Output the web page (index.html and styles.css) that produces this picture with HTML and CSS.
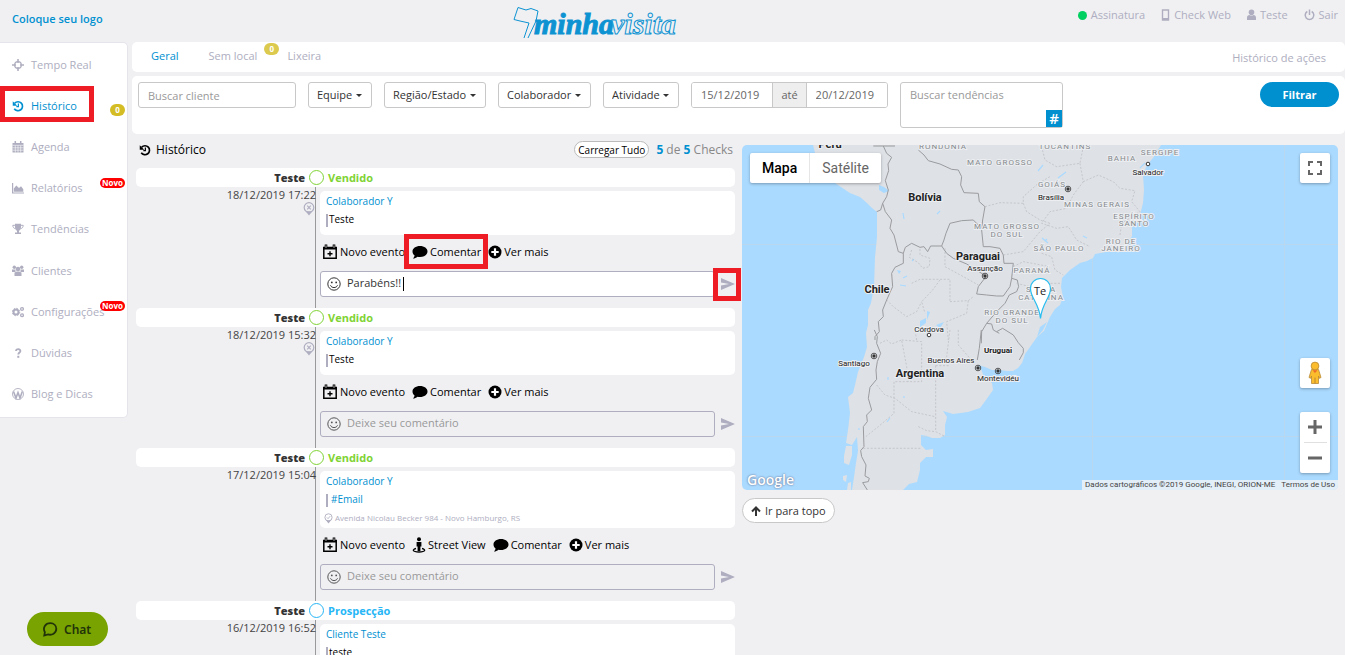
FILE: index.html
```html
<!DOCTYPE html>
<html lang="pt-BR">
<head>
    <meta charset="UTF-8">
    <meta name="viewport" content="width=device-width, initial-scale=1.0">
    <title>Minha Visita - Histórico</title>
    <link rel="stylesheet" href="styles.css">
</head>
<body>

    <!-- Shared icons -->
    <svg class="sprite" width="0" height="0" aria-hidden="true">
        <symbol id="i-history" viewBox="0 0 16 16"><path d="M3.6 4.2A6 6 0 1 1 3 11.6" fill="none" stroke="currentColor" stroke-width="2.2"/><path d="M1 1.5v6h6z" fill="currentColor"/><path d="M8.5 4.8v4H5.8" fill="none" stroke="currentColor" stroke-width="1.6"/></symbol>
        <symbol id="i-event" viewBox="0 0 16 16"><path d="M1.8 3.5h12.4v10.7H1.8z" fill="none" stroke="currentColor" stroke-width="1.5"/><path d="M1 3h14v2.500H1z" fill="currentColor"/><path d="M4 .6v4M12 .6v4" stroke="currentColor" stroke-width="2.6"/><path d="M4 1.4v2.4M12 1.4v2.4" stroke="#fff" stroke-width=".8"/><path d="M8 7.300v5M5.500 9.800h5" stroke="currentColor" stroke-width="1.4"/></symbol>
        <symbol id="i-comment" viewBox="0 0 16 14"><path d="M8 1c4.300 0 7.500 2.400 7.500 5.500S12.300 12 8 12c-.9 0-1.700-.1-2.500-.3C4.200 12.800 2.600 13.400 1 13.500c.9-.9 1.500-1.900 1.600-3C1.300 9.500.5 8.100.5 6.500.5 3.400 3.700 1 8 1z" fill="currentColor"/></symbol>
        <symbol id="i-plus" viewBox="0 0 14 14"><circle cx="7" cy="7" r="6.500" fill="currentColor"/><path d="M7 3.300v7.400M3.300 7h7.400" stroke="#fff" stroke-width="2.200"/></symbol>
        <symbol id="i-street" viewBox="0 0 14 16"><circle cx="7" cy="2.300" r="2" fill="currentColor"/><path d="M4.600 5h4.800v4.500h-1V14H5.600V9.500h-1z" fill="currentColor"/><path d="M4 11.500c-4 .8-4 3.500 3 3.500s7-2.700 3-3.500" fill="none" stroke="currentColor" stroke-width="1.300"/></symbol>
        <symbol id="i-smile" viewBox="0 0 14 14"><circle cx="7" cy="7" r="6.200" fill="none" stroke="currentColor"/><circle cx="4.800" cy="5.400" r=".9" fill="currentColor"/><circle cx="9.200" cy="5.400" r=".9" fill="currentColor"/><path d="M3.500 8.300c1 3 6 3 7 0" fill="none" stroke="currentColor"/></symbol>
        <symbol id="i-send" viewBox="0 0 14 12"><path d="M0 0l14 6L0 12V7.600L8 6 0 4.400z" fill="currentColor"/></symbol>
        <symbol id="i-pin-x" viewBox="0 0 12 14"><path d="M6 13.500L2.600 9.300h6.800z" fill="currentColor"/><circle cx="6" cy="5.500" r="4.800" fill="none" stroke="currentColor" stroke-width="1.200"/><path d="M4.200 3.700l3.600 3.600M7.800 3.700L4.200 7.300" stroke="currentColor" stroke-width="1.100"/></symbol>
        <symbol id="i-pin-ok" viewBox="0 0 12 14"><path d="M6 13.500L2.600 9.300h6.800z" fill="currentColor"/><circle cx="6" cy="5.500" r="4.800" fill="none" stroke="currentColor" stroke-width="1.200"/><path d="M3.800 5.500l1.600 1.700 2.900-3.400" fill="none" stroke="currentColor" stroke-width="1.100"/></symbol>
    </svg>

    <header class="topbar">
        <a href="#" class="client-logo">Coloque seu logo</a>
        <a href="#" class="brand" aria-label="minhavisita">
            <svg width="166" height="34" viewBox="0 0 166 34">
                <path d="M5 2.500l8 2.500 5-1.500 7 2.500-2 10-8 17M1 14.500l6 1.500 9 2M5 2.500L1 14.500M16 18l-5 15" fill="none" stroke="#0d93d2"/>
                <text x="21" y="29" class="brand-solid">minha</text>
                <text x="98" y="29" class="brand-line">visita</text>
            </svg>
        </a>
        <nav class="user-links">
            <a href="#"><span class="status-dot"></span>Assinatura</a>
            <a href="#"><svg width="9" height="12" viewBox="0 0 9 12"><path d="M1.500 1h6v10h-6z" fill="none" stroke="currentColor" stroke-width="1.400"/><path d="M1 9h7v2H1z" fill="currentColor"/></svg>Check Web</a>
            <a href="#"><svg width="9" height="12" viewBox="0 0 9 12"><circle cx="4.500" cy="3.300" r="2.800" fill="currentColor"/><path d="M0 11V8.500C0 7 1 6 2.400 6c1.200.8 3 .8 4.200 0C8 6 9 7 9 8.500V11z" fill="currentColor"/></svg>Teste</a>
            <a href="#"><svg width="11" height="12" viewBox="0 0 11 12"><path d="M3.300 2.500a4.300 4.300 0 1 0 4.400 0M5.500.5v5.500" fill="none" stroke="currentColor" stroke-width="1.500"/></svg>Sair</a>
        </nav>
    </header>

    <div class="layout">
        <aside class="sidebar">
            <ul class="menu">
                <li><a href="#"><svg viewBox="0 0 12 12"><circle cx="6" cy="6" r="3.300" fill="none" stroke="currentColor" stroke-width="1.300"/><path d="M6 0v4M6 8v4M0 6h4M8 6h4" stroke="currentColor" stroke-width="1.600"/></svg>Tempo Real</a></li>
                <li class="active"><a href="#"><svg><use href="#i-history"/></svg>Histórico</a><span class="count">0</span></li>
                <li><a href="#"><svg viewBox="0 0 12 12"><path d="M.5 2h11v9.500H.5z" fill="currentColor"/><path d="M3.300 0v3M8.700 0v3" stroke="currentColor" stroke-width="1.500"/><path d="M.5 4.300h11M.5 6.800h11M.5 9.200h11M3.300 4.500v7M6 4.500v7M8.700 4.500v7" stroke="#fff" stroke-width=".6"/></svg>Agenda</a></li>
                <li><a href="#"><svg viewBox="0 0 12 12"><path d="M.6 1v10H12" fill="none" stroke="currentColor" stroke-width="1.200"/><path d="M1.800 9.800V6.500L4.300 3.500 7 6l2-1.800 2.300 3v2.600z" fill="currentColor"/></svg>Relatórios</a><span class="new">Novo</span></li>
                <li><a href="#"><svg viewBox="0 0 12 12"><path d="M3 .8h6v3.500C9 6.500 7.500 7.500 7 7.800V9.500h2V11H3V9.500h2V7.800C4.500 7.500 3 6.500 3 4.300z" fill="currentColor"/><path d="M3 2.300H.8c0 2 1 3 2.600 3.400M9 2.300h2.200c0 2-1 3-2.600 3.400" fill="none" stroke="currentColor"/></svg>Tendências</a></li>
                <li><a href="#"><svg viewBox="0 0 12 12"><circle cx="2.300" cy="2.300" r="1.700" fill="currentColor"/><circle cx="9.700" cy="2.300" r="1.700" fill="currentColor"/><circle cx="6" cy="4" r="2.300" fill="currentColor"/><path d="M0 4.500h3.500V7H0zM8.500 4.500H12V7H8.500zM2.500 7.500C4 6 8 6 9.500 7.500V11h-7z" fill="currentColor"/></svg>Clientes</a></li>
                <li><a href="#"><svg viewBox="0 0 12 12"><circle cx="4" cy="6" r="2.500" fill="none" stroke="currentColor" stroke-width="2"/><circle cx="4" cy="6" r="3.700" fill="none" stroke="currentColor" stroke-dasharray="1.500 1.400"/><circle cx="10" cy="3" r="1.400" fill="none" stroke="currentColor" stroke-width="1.300"/><circle cx="10" cy="9.300" r="1.400" fill="none" stroke="currentColor" stroke-width="1.300"/></svg>Configurações</a><span class="new">Novo</span></li>
                <li><a href="#"><svg viewBox="0 0 12 12"><path d="M4 4c0-2.600 4.600-2.400 4.400.2C8.300 5.600 6.300 5.600 6.300 7.600" fill="none" stroke="currentColor" stroke-width="1.800"/><path d="M5.300 8.800h2v2h-2z" fill="currentColor"/></svg>Dúvidas</a></li>
                <li><a href="#"><svg viewBox="0 0 12 12"><circle cx="6" cy="6" r="5.500" fill="none" stroke="currentColor" stroke-width=".9"/><path d="M1.500 3.500L4 10l2-5.500L8 10l2.300-6.500" fill="none" stroke="currentColor" stroke-width="1.600"/></svg>Blog e Dicas</a></li>
            </ul>
        </aside>

        <main class="main">
            <nav class="tabs">
                <a href="#" class="active">Geral</a>
                <a href="#">Sem local<span class="count faded">0</span></a>
                <a href="#">Lixeira</a>
                <a href="#" class="actions-log">Histórico de ações</a>
            </nav>

            <form class="filters">
                <input type="text" class="field client" placeholder="Buscar cliente" aria-label="Buscar cliente">
                <label class="drop"><select aria-label="Equipe"><option>Equipe</option></select></label>
                <label class="drop"><select aria-label="Região/Estado"><option>Região/Estado</option></select></label>
                <label class="drop"><select aria-label="Colaborador"><option>Colaborador</option></select></label>
                <label class="drop"><select aria-label="Atividade"><option>Atividade</option></select></label>
                <div class="dates">
                    <input type="text" value="15/12/2019" aria-label="Data inicial">
                    <span>até</span>
                    <input type="text" value="20/12/2019" aria-label="Data final">
                </div>
                <div class="trends">
                    <textarea placeholder="Buscar tendências" aria-label="Buscar tendências"></textarea>
                    <button type="button" aria-label="Adicionar tendência">#</button>
                </div>
                <button type="button" class="filter-button">Filtrar</button>
            </form>

            <div class="content">
                <section class="timeline">
                    <div class="timeline-title">
                        <h2><svg width="12" height="12"><use href="#i-history"/></svg>Histórico</h2>
                        <button type="button" class="load-all">Carregar Tudo</button>
                        <p><b>5</b> de <b>5</b> Checks</p>
                    </div>

                    <div class="entries">
                        <article class="entry">
                            <div class="entry-head"><strong>Teste</strong><i class="dot"></i><span>Vendido</span></div>
                            <div class="entry-when"><time>18/12/2019 17:22</time><svg width="12" height="14"><use href="#i-pin-x"/></svg></div>
                            <div class="entry-body">
                                <div class="card"><a href="#">Colaborador Y</a><p>Teste</p></div>
                                <div class="actions">
                                    <button type="button"><svg width="16" height="16"><use href="#i-event"/></svg>Novo evento</button>
                                    <button type="button" class="marked"><svg width="16" height="14"><use href="#i-comment"/></svg>Comentar</button>
                                    <button type="button"><svg width="14" height="14"><use href="#i-plus"/></svg>Ver mais</button>
                                </div>
                                <div class="reply">
                                    <div class="reply-box writing"><svg width="14" height="14"><use href="#i-smile"/></svg><div class="typed"><input type="text" value="Parabéns!!" aria-label="Comentário"><span class="caret"></span></div></div>
                                    <button type="button" class="send marked" aria-label="Enviar"><svg width="14" height="12"><use href="#i-send"/></svg></button>
                                </div>
                            </div>
                        </article>

                        <article class="entry">
                            <div class="entry-head"><strong>Teste</strong><i class="dot"></i><span>Vendido</span></div>
                            <div class="entry-when"><time>18/12/2019 15:32</time><svg width="12" height="14"><use href="#i-pin-x"/></svg></div>
                            <div class="entry-body">
                                <div class="card"><a href="#">Colaborador Y</a><p>Teste</p></div>
                                <div class="actions">
                                    <button type="button"><svg width="16" height="16"><use href="#i-event"/></svg>Novo evento</button>
                                    <button type="button"><svg width="16" height="14"><use href="#i-comment"/></svg>Comentar</button>
                                    <button type="button"><svg width="14" height="14"><use href="#i-plus"/></svg>Ver mais</button>
                                </div>
                                <div class="reply">
                                    <div class="reply-box"><svg width="14" height="14"><use href="#i-smile"/></svg><input type="text" placeholder="Deixe seu comentário" aria-label="Comentário"></div>
                                    <button type="button" class="send" aria-label="Enviar"><svg width="14" height="12"><use href="#i-send"/></svg></button>
                                </div>
                            </div>
                        </article>

                        <article class="entry">
                            <div class="entry-head"><strong>Teste</strong><i class="dot"></i><span>Vendido</span></div>
                            <div class="entry-when"><time>17/12/2019 15:04</time></div>
                            <div class="entry-body">
                                <div class="card">
                                    <a href="#">Colaborador Y</a>
                                    <p><a href="#" class="tag">#Email</a></p>
                                    <address><svg width="9" height="11"><use href="#i-pin-ok"/></svg>Avenida Nicolau Becker 984 - Novo Hamburgo, RS</address>
                                </div>
                                <div class="actions">
                                    <button type="button"><svg width="16" height="16"><use href="#i-event"/></svg>Novo evento</button>
                                    <button type="button"><svg width="14" height="16"><use href="#i-street"/></svg>Street View</button>
                                    <button type="button"><svg width="16" height="14"><use href="#i-comment"/></svg>Comentar</button>
                                    <button type="button"><svg width="14" height="14"><use href="#i-plus"/></svg>Ver mais</button>
                                </div>
                                <div class="reply">
                                    <div class="reply-box"><svg width="14" height="14"><use href="#i-smile"/></svg><input type="text" placeholder="Deixe seu comentário" aria-label="Comentário"></div>
                                    <button type="button" class="send" aria-label="Enviar"><svg width="14" height="12"><use href="#i-send"/></svg></button>
                                </div>
                            </div>
                        </article>

                        <article class="entry prospect">
                            <div class="entry-head"><strong>Teste</strong><i class="dot"></i><span>Prospecção</span></div>
                            <div class="entry-when"><time>16/12/2019 16:52</time></div>
                            <div class="entry-body">
                                <div class="card"><a href="#">Cliente Teste</a><p>teste</p></div>
                            </div>
                        </article>
                    </div>
                </section>

                <section class="map-column">
                    <div class="map">
                        <svg class="map-canvas" viewBox="0 0 596 345" preserveAspectRatio="xMidYMid slice">
                            <g stroke="#b9d8f0" stroke-width="1"><path d="M0 99.500h596M0 291.500h596M350.500 0v345M542.500 0v345"/></g>
                            <!-- Land -->
                            <path fill="#dee1e6" d="M71 0L73 8 82 24 93 38 108 48 118 52 125 58 130 63 135 67 135 92 133 112 132 142 129 158 126 165 126 180 124 188 125 202 122 212 116 227 113 240 111 248 106 252 108 268 106 285 104 298 110 300 115 292 116 306 114 318 112 332 110 345 161 345 167 339 175 337 178 325 178 318 184 312 191 312 191 304 184 305 179 300 179 290 185 291 190 293 198 293 203 290 203 280 205 272 201 266 211 269 226 267 238 263 244 255 251 245 250 238 242 232 239 224 236 220 243 222 250 225 258 225 265 226 271 226 276 223 280 218 283 209 288 202 295 192 302 186 308 172 313 164 318 160 321 152 319 142 320 133 328 125 338 118 345 116 351 113 353 109 364 107 378 107 383 104 386 98 390 91 390 82 396 76 398 70 401 58 402 45 401 30 405 20 411 13 419 0z"/>
                            <path fill="#dee1e6" d="M104 301L110 301 110 310 107 320 102 318 102 311zM101 331l4-1-1 7-3-2zM106 338l3-1 0 8-4 0z"/>
                            <path fill="#aadaff" d="M137 40l5 2 5 4-5 2-5-3zM178 176l6-3 0 5-6 4zM194 180l8-3-4 6zM185 166l3 1-3 8zM155 125l4 1-2 3zM298 182l7-5-4 8-6 7z"/>
                            <path fill="none" stroke="#aadaff" stroke-width="1.200" d="M161 68l1 6M195 69l3-3M296 26l5-6M300 93l6 5M303 96l2-2M146 232v3M162 251v2M148 273l-3 4M165 131l-4 2M316 33l8-6M341 91l4 2M117 283v2M158 140l6 1M398 23l5-5M170 116l2-2"/>
                            <!-- Country borders -->
                            <g transform="scale(.3333)" fill="none" stroke="#9a9b9e" stroke-width="3">
                                <g transform="translate(-6 -15)">
                                    <path d="M400 18h65M430 18L440 40 455 52 444 72 446 92 436 122 445 150 440 170 428 190 422 210 410 215M428 190L436 215 455 240 450 265 462 285 475 335 490 340 496 322 515 310 540 322 552 320 563 335 572 318 605 318 612 300 618 280 630 250 665 242 700 240 712 252 725 270 730 320 750 320 780 325 790 345 792 370 820 370 815 415 810 440 790 468 770 468 740 465 710 462 715 440 738 410 728 402 680 372 640 355 620 340 605 318"/>
                                    <path d="M535 30L552 45 565 62 600 72 635 88 655 90 665 110 662 135 672 158 715 160 718 185 735 200 728 240 725 270"/>
                                    <path d="M490 340L490 370 465 382 455 400 458 440 440 480 428 510 430 530 415 545 418 575 405 590 405 600"/>
                                    <path d="M815 415L832 420 836 440 830 455 808 465 795 490 770 515 740 550 725 575 724 610M740 550L755 552 760 570 778 580"/>
                                </g>
                                <g transform="translate(-6 555)">
                                    <path d="M403 0L412 20 410 40 422 70 412 95 408 120 410 148 390 172 385 205 395 240 380 255 382 275 370 290 372 350 362 362 365 380 378 405 375 438 388 445 385 455 368 458 382 480"/>
                                    <path d="M724 0L718 55 712 90M770 5L788 -5 820 15 835 38 850 55 850 68 838 90"/>
                                </g>
                            </g>
                            <!-- State borders -->
                            <g transform="scale(.3333)" fill="none" stroke="#b8babe" stroke-width="2" stroke-dasharray="6 5">
                                <g transform="translate(-6 -15)">
                                    <path d="M515 330L508 352 535 368 548 385 568 380 570 355 540 345 540 322M615 325V380L670 410 715 435M515 430L540 418 630 418V485M600 420L578 450 545 485 555 520M630 485L685 482 700 470M440 480L460 500 500 530 530 515 545 485M685 482L680 520 620 545 625 600M735 200L780 188 850 190 850 170 895 130 930 110M850 190L860 215 900 240 930 250M790 345L850 335 900 275 930 250M820 380L850 365 930 380M830 430L870 440 930 435"/>
                                </g>
                                <g transform="translate(-6 555)">
                                    <path d="M420 40L440 30 455 42 485 30 500 110 505 155M485 30L545 35V155H462V250L415 290 375 322M410 165L435 195 465 205 515 245 585 260M587 107H630M587 107V305L612 318M370 355H545M530 30L525 0M630 0L620 80 600 100M655 0L655 45 690 85M535 290L560 302 587 305"/>
                                </g>
                                <g transform="translate(894 -15)">
                                    <path d="M5 20L15 60 50 80 120 70 130 20M120 70L130 125 175 105 220 125 240 145 285 152 275 185 300 215M130 125L100 165 80 205 30 215 5 250 50 265 85 260 110 300 150 320M240 285L245 250 300 215M5 340L35 350 45 390 70 405M10 430L60 430"/>
                                </g>
                            </g>
                            <g class="map-states">
                                <text x="201" y="4">RONDÔNIA</text><text x="258" y="20">MATO GROSSO</text><text x="323" y="4">TOCANTINS</text>
                                <text x="380" y="16">BAHIA</text><text x="418" y="10">SERGIPE</text><text x="310" y="42">GOIÁS</text>
                                <text x="355" y="62">MINAS GERAIS</text><text x="392" y="74">ESPÍRITO</text><text x="392" y="81">SANTO</text>
                                <text x="265" y="84">MATO GROSSO</text><text x="265" y="92">DO SUL</text><text x="317" y="106">SÃO PAULO</text>
                                <text x="379" y="99">RIO DE</text><text x="379" y="106">JANEIRO</text><text x="290" y="128">PARANÁ</text>
                                <text x="299" y="147">SANTA</text><text x="299" y="155">CATARINA</text><text x="270" y="170">RIO GRANDE</text><text x="270" y="178">DO SUL</text>
                            </g>
                            <g class="map-countries">
                                <text x="88" y="3">Peru</text><text x="183" y="56">Bolívia</text><text x="236" y="115">Paraguai</text>
                                <text x="135" y="148">Chile</text><text x="178" y="232">Argentina</text><text x="256" y="208" class="small">Uruguai</text>
                            </g>
                            <g class="map-cities">
                                <text x="406" y="30">Salvador</text><text x="309" y="55">Brasília</text><text x="243" y="126">Assunção</text>
                                <text x="187" y="187">Córdova</text><text x="112" y="221">Santiago</text><text x="209" y="218">Buenos Aires</text><text x="256" y="236">Montevidéu</text>
                            </g>
                            <g fill="#fff" stroke="#333"><circle cx="406" cy="19" r="1.800"/><circle cx="187" cy="190" r="1.800"/></g>
                            <g fill="#333" stroke="#333">
                                <circle cx="326" cy="44" r="1.200"/><circle cx="243" cy="131" r="1.200"/><circle cx="132" cy="211" r="1.200"/><circle cx="236" cy="223" r="1.200"/><circle cx="256" cy="226" r="1.200"/>
                            </g>
                            <g fill="none" stroke="#333" stroke-width=".8">
                                <circle cx="326" cy="44" r="2.800"/><circle cx="243" cy="131" r="2.800"/><circle cx="132" cy="211" r="2.800"/><circle cx="236" cy="223" r="2.800"/><circle cx="256" cy="226" r="2.800"/>
                            </g>
                            <!-- Check marker -->
                            <path d="M298.500 173.500C297 158 288.500 153 288.500 143.500a10 10 0 0 1 20 0C308.500 153 300 158 298.500 173.500z" fill="#fff" stroke="#27bdf0" stroke-width="1.200"/>
                            <text x="298" y="150" class="marker-text">Te</text>
                        </svg>
                        <div class="map-types"><button type="button" class="on">Mapa</button><button type="button">Satélite</button></div>
                        <button type="button" class="map-button full" aria-label="Tela cheia"><svg width="14" height="14" viewBox="0 0 14 14"><path d="M1 5V1h4M9 1h4v4M13 9v4H9M5 13H1V9" fill="none" stroke="#666" stroke-width="2"/></svg></button>
                        <div class="map-tools">
                            <button type="button" class="map-button" aria-label="Street View"><svg width="14" height="24" viewBox="0 0 14 24"><path d="M3.500 8.500h7l2.500 8-1.800.8L10.500 15v7.500h-7V15l-.7 2.300L1 16.500z" fill="#fbbc2d" stroke="#b98a35" stroke-width=".8"/><path d="M7 16.500v6" stroke="#b98a35"/><circle cx="7" cy="5" r="3.900" fill="#fbbc2d" stroke="#b98a35" stroke-width=".8"/><path d="M4.500 9.200h5L7 12z" fill="#ee6c2b"/></svg></button>
                            <div class="zoom">
                                <button type="button" aria-label="Aumentar"><svg width="14" height="14" viewBox="0 0 14 14"><path d="M7 0v14M0 7h14" stroke="#666" stroke-width="3"/></svg></button>
                                <button type="button" aria-label="Diminuir"><svg width="14" height="14" viewBox="0 0 14 14"><path d="M0 7h14" stroke="#666" stroke-width="3"/></svg></button>
                            </div>
                        </div>
                        <span class="google">Google</span>
                        <div class="map-terms"><span>Dados cartográficos ©2019 Google, INEGI, ORION-ME</span><a href="#">Termos de Uso</a></div>
                    </div>
                    <button type="button" class="to-top"><svg width="10" height="10" viewBox="0 0 10 10"><path d="M5 10V2M1 5.500l4-4 4 4" fill="none" stroke="currentColor" stroke-width="2"/></svg>Ir para topo</button>
                </section>
            </div>
        </main>
    </div>

    <button type="button" class="chat"><svg width="16" height="15" viewBox="0 0 16 15"><path d="M2.300 13.500l.6-3.300C.3 5.800 3.500 1.200 8.300 1.200c3.600 0 6 2.500 6 5.600 0 4.500-4.500 6.800-8.300 5.600z" fill="none" stroke="currentColor" stroke-width="1.800"/></svg>Chat</button>

</body>
</html>
```

FILE: styles.css
```css
*,
*::before,
*::after {
    box-sizing: border-box;
}
body {
    margin: 0;
    height: 100vh;
    overflow: hidden;
    background: #f0f0f3;
    font-family: "Open Sans", sans-serif;
    font-size: 11px;
    line-height: 18px;
    color: #333;
}
a {
    color: #0090d0;
    text-decoration: none;
}
button,
input,
select,
textarea {
    margin: 0;
    font: inherit;
    color: inherit;
}
button {
    padding: 0;
    border: 0;
    background: none;
    cursor: pointer;
}
p, h2, ul {
    margin: 0;
    padding: 0;
}
.sprite {
    position: absolute;
}

/* Top bar */
.topbar {
    display: grid;
    grid-template-columns: 38% auto 1fr;
    height: 42px;
    padding-right: 7px;
}
.client-logo {
    padding: 10px 12px;
    font-weight: 600;
}
.brand {
    padding: 5px 0 0 5px;
}
.brand svg {
    display: block;
    overflow: visible;
}
.brand-solid,
.brand-line {
    font: italic bold 30px "Liberation Serif", serif;
    fill: #0d93d2;
}
.brand-solid {
    stroke: #0d93d2;
}
.brand-line {
    fill: #f0f0f3;
    stroke: #0d93d2;
}
.user-links {
    display: flex;
    justify-content: flex-end;
    gap: 16px;
    padding-top: 6px;
}
.user-links a {
    display: flex;
    align-items: center;
    gap: 4px;
    height: 18px;
    color: #aeaec0;
}
.status-dot {
    width: 9px;
    height: 9px;
    border-radius: 50%;
    background: #00d060;
}

/* Side menu */
.layout {
    display: flex;
    align-items: flex-start;
    gap: 4px;
}
.sidebar {
    flex: none;
    width: 128px;
    padding: 1px 0 2px;
    border: 1px solid #e4e4ea;
    border-left: 0;
    border-top-right-radius: 5px;
    border-bottom-right-radius: 5px;
    background: #fff;
}
.menu {
    display: grid;
    grid-auto-rows: 1fr;
    height: 371px;
    list-style: none;
}
.menu li {
    position: relative;
    display: flex;
    align-items: center;
}
.menu a {
    display: flex;
    align-items: center;
    gap: 7px;
    padding-left: 12px;
    color: #aeaec0;
}
.menu svg {
    width: 12px;
    height: 12px;
}
.menu .active a {
    color: #0090d0;
}
.menu .active::after {
    content: "";
    position: absolute;
    top: 1px;
    left: 0;
    width: 94px;
    height: 36px;
    border: 5px solid #ee1c25;
}
.count {
    position: absolute;
    top: 19px;
    right: 2px;
    width: 15px;
    height: 12px;
    border-radius: 6px;
    background: #d4bd24;
    color: #fff;
    font-size: 8px;
    font-weight: 700;
    line-height: 12px;
    text-align: center;
}
.new {
    position: absolute;
    top: 10px;
    right: 2px;
    width: 25px;
    height: 10px;
    border-radius: 5px;
    background: #f00;
    color: #fff;
    font-size: 8px;
    font-weight: 700;
    line-height: 10px;
    text-align: center;
}

/* Tabs */
.main {
    flex: 1;
    min-width: 0;
}
.tabs {
    display: flex;
    gap: 30px;
    height: 30px;
    margin-bottom: 4px;
    padding: 5px 19px;
    border-radius: 5px;
    background: #fff;
}
.tabs a {
    position: relative;
    color: #aeaec0;
}
.tabs a.active {
    color: #0090d0;
}
.tabs .actions-log {
    margin-left: auto;
    padding-top: 2px;
}
.tabs .count {
    top: -4px;
    right: -22px;
}
.faded {
    opacity: .8;
}

/* Filters */
.filters {
    display: flex;
    align-items: flex-start;
    gap: 12px;
    padding: 6px;
    border-radius: 5px;
    background: #fff;
}
.field,
.drop select,
.dates,
.trends textarea {
    height: 26px;
    border: 1px solid #c8c8c8;
    border-radius: 3px;
    background: #fff;
}
.client {
    width: 158px;
    padding: 0 9px;
}
.drop {
    position: relative;
}
.drop select {
    display: block;
    padding: 0 18px 0 8px;
    appearance: none;
}
.drop::after {
    content: "";
    position: absolute;
    top: 12px;
    right: 10px;
    border: 3px solid transparent;
    border-top-color: #333;
    border-bottom: 0;
}
.dates {
    display: flex;
    width: 197px;
    color: #666;
    line-height: 24px;
    overflow: hidden;
}
.dates input {
    flex: 1;
    min-width: 0;
    padding: 0 9px;
    border: 0;
}
.dates span {
    padding: 0 8px;
    border: 1px solid #c8c8c8;
    border-width: 0 1px;
    background: #eee;
}
.trends {
    position: relative;
}
.trends textarea {
    display: block;
    width: 163px;
    height: 46px;
    padding: 3px 9px;
    resize: none;
}
.trends button {
    position: absolute;
    right: 1px;
    bottom: 1px;
    width: 16px;
    height: 17px;
    background: #0090d0;
    color: #fff;
    font-size: 15px;
    font-weight: 600;
    line-height: 17px;
}
::placeholder {
    color: #999;
    opacity: 1;
}
.filter-button {
    width: 79px;
    height: 25px;
    margin-left: auto;
    border-radius: 13px;
    background: #0090d0;
    color: #fff;
    font-weight: 700;
}

/* Timeline */
.content {
    display: grid;
    grid-template-columns: calc(50% - 2px) 1fr;
    gap: 7px;
    padding: 0 7px 0 4px;
}
.timeline-title {
    display: flex;
    align-items: center;
    height: 34px;
    padding: 0 2px 3px 3px;
    font-size: 12px;
}
.timeline-title h2 {
    display: flex;
    align-items: center;
    gap: 5px;
    margin-right: auto;
    font-size: 12px;
    font-weight: 400;
    color: #000;
}
.load-all {
    height: 17px;
    margin-right: 7px;
    padding: 0 3px;
    border: 1px solid #bbb;
    border-radius: 9px;
    background: #fff;
    color: #000;
    font-size: 10px;
    line-height: 14px;
}
.timeline-title p {
    color: #888;
}
.timeline-title b {
    color: #0090d0;
}
.entries {
    background: linear-gradient(#999, #999) 179px 0 / 1px 100% no-repeat;
}
.entry {
    display: grid;
    grid-template-columns: 180px 1fr;
    column-gap: 4px;
    margin-bottom: 11px;
}
.entry-head {
    grid-column: 1 / 3;
    display: grid;
    grid-template-columns: 169px 15px 1fr;
    align-items: center;
    column-gap: 4px;
    height: 19px;
    margin-bottom: 4px;
    border-radius: 5px;
    background: #fff;
    font-weight: 700;
    color: #7fd334;
}
.entry-head strong {
    color: #333;
    text-align: right;
}
.dot {
    width: 15px;
    height: 15px;
    border: 1px solid #7fd334;
    border-radius: 50%;
    background: #fff;
}
.prospect .entry-head {
    color: #27b6f6;
}
.prospect .dot {
    border-color: #27b6f6;
}
.entry-when {
    display: flex;
    flex-direction: column;
    align-items: flex-end;
    margin-top: -5px;
    color: #444;
}
.entry-when svg {
    margin: -2px 1px 0 0;
    color: #aeaec0;
}
.entry-body {
    min-width: 0;
}
.card {
    padding: 1px 6px;
    border-radius: 5px;
    background: #fff;
    font-size: 10px;
    color: #000;
}
.card > a {
    display: block;
}
.card p {
    margin-bottom: 6px;
    height: 18px;
}
.card p::before {
    content: "";
    display: inline-block;
    width: 2px;
    height: 13px;
    margin-right: 1px;
    background: #aeaec0;
    vertical-align: middle;
}
.tag {
    padding-left: 2px;
}
.card address {
    display: flex;
    align-items: center;
    gap: 2px;
    margin: -5px 0 0 -2px;
    color: #aeaec0;
    font-size: 8px;
    font-style: normal;
}
.actions {
    display: flex;
    gap: 7px;
    height: 36px;
    padding: 0 0 2px 2px;
}
.actions button {
    position: relative;
    display: flex;
    align-items: center;
    gap: 2px;
    color: #000;
}
.actions .marked::after {
    content: "";
    position: absolute;
    top: -1px;
    left: -8px;
    right: -7px;
    height: 35px;
    border: 5px solid #ee1c25;
}
.reply {
    display: flex;
    align-items: center;
    gap: 6px;
}
.reply-box {
    flex: 1;
    display: flex;
    align-items: center;
    gap: 6px;
    height: 26px;
    padding: 0 6px;
    border: 1px solid #aeaec0;
    border-radius: 3px;
    color: #555;
}
.reply-box input {
    flex: 1;
    width: 100%;
    padding: 0 0 2px;
    border: 0;
    background: none;
    outline: 0;
}
.writing {
    background: #fff;
    color: #333;
}
.typed {
    display: flex;
    align-items: center;
}
.reply-box .typed input {
    flex: none;
    width: 56px;
}
.caret {
    width: 1px;
    height: 14px;
    background: #000;
}
.send {
    position: relative;
    width: 14px;
    height: 12px;
    color: #aeaec0;
}
.send svg {
    display: block;
}
.send.marked::after {
    content: "";
    position: absolute;
    top: -10px;
    left: -8px;
    width: 28px;
    height: 33px;
    border: 5px solid #ee1c25;
}

/* Map */
.map-column {
    padding-top: 11px;
}
.map {
    position: relative;
    height: 345px;
    margin-bottom: 8px;
    border-radius: 5px;
    overflow: hidden;
    background: #aadaff;
    font-family: Roboto, sans-serif;
}
.map-canvas {
    display: block;
    width: 100%;
    height: 100%;
}
.map-canvas text {
    text-anchor: middle;
    font-family: Roboto, sans-serif;
    paint-order: stroke;
    stroke: #eceef1;
    stroke-width: 2px;
}
.map-states text {
    font-size: 8px;
    letter-spacing: 1px;
    fill: #85898d;
}
.map-countries text {
    font-size: 11px;
    font-weight: 700;
    fill: #222;
}
.map-countries .small {
    font-size: 8px;
}
.map-cities text {
    font-size: 8px;
    fill: #222;
}
.map-canvas .marker-text {
    font: 11px "Open Sans", sans-serif;
    fill: #222;
    stroke: none;
}
.map-types {
    position: absolute;
    top: 8px;
    left: 8px;
    display: flex;
    border-radius: 2px;
    background: #fff;
    box-shadow: 0 1px 3px rgba(0, 0, 0, .3);
}
.map-types button {
    height: 30px;
    padding: 0 12px;
    font-size: 14px;
    color: #666;
}
.map-types .on {
    border-right: 1px solid #e6e6e6;
    color: #000;
    font-weight: 500;
}
.map-button,
.zoom {
    display: flex;
    align-items: center;
    justify-content: center;
    width: 30px;
    height: 30px;
    border-radius: 2px;
    background: #fff;
    box-shadow: 0 1px 3px rgba(0, 0, 0, .3);
}
.full {
    position: absolute;
    top: 8px;
    right: 8px;
}
.map-tools {
    position: absolute;
    right: 8px;
    bottom: 17px;
    display: grid;
    gap: 24px;
}
.zoom {
    flex-direction: column;
    height: 61px;
}
.zoom button {
    flex: 1;
    width: 23px;
}
.zoom button + button {
    border-top: 1px solid #e0e0e0;
}
.zoom svg {
    display: block;
    margin: auto;
}
.google {
    position: absolute;
    left: 5px;
    bottom: 1px;
    color: #fff;
    font: 600 14px "Open Sans", sans-serif;
    text-shadow: 0 0 2px #557;
}
.map-terms {
    position: absolute;
    right: 0;
    bottom: 0;
    display: flex;
    gap: 6px;
    height: 10px;
    padding: 0 3px;
    background: rgba(245, 245, 245, .75);
    font-size: 8px;
    line-height: 10px;
    color: #444;
}
.map-terms a {
    color: #444;
}
.to-top {
    display: flex;
    align-items: center;
    gap: 4px;
    height: 25px;
    padding: 0 8px;
    border: 1px solid #c8c8c8;
    border-radius: 13px;
    background: #fff;
}

/* Chat */
.chat {
    position: fixed;
    left: 27px;
    bottom: 9px;
    display: flex;
    align-items: center;
    gap: 6px;
    height: 34px;
    padding: 0 17px 0 15px;
    border-radius: 17px;
    background: #78a300;
    color: #22330a;
    font: 600 12px "Noto Sans", sans-serif;
}
```
